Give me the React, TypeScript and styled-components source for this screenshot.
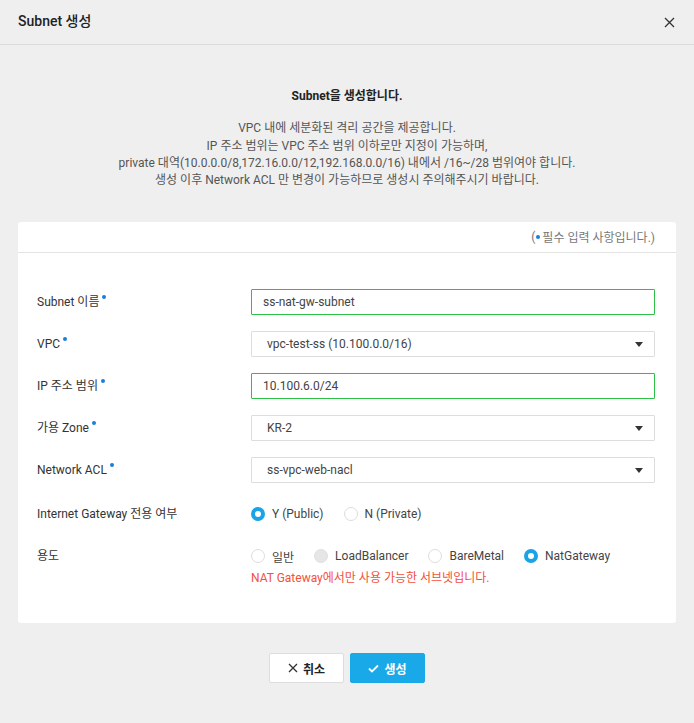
import React, { useState } from 'react'
import styled, { createGlobalStyle } from 'styled-components'

const GlobalStyle = createGlobalStyle`
  html, body {
    margin: 0;
    padding: 0;
    background: #efefef;
    font-family: Roboto, "Noto Sans CJK KR", sans-serif;
    color: #333;
  }
`

const Page = styled.div`
  width: 694px;
  min-height: 723px;
  background: #efefef;
`

const Header = styled.header`
  height: 45px;
  box-sizing: border-box;
  border-bottom: 1px solid #dcdcdc;
  padding: 0 18px;
  display: flex;
  align-items: center;
  justify-content: space-between;
`

const Title = styled.h1`
  margin: 0 0 4px 0;
  font-size: 14px;
  font-weight: 500;
  color: #222;
`

const CloseBtn = styled.button`
  border: none;
  background: none;
  padding: 0;
  width: 14px;
  height: 14px;
  display: flex;
  align-items: center;
  justify-content: center;
  cursor: pointer;
`

const Intro = styled.section`
  padding: 43px 18px 33px;
  text-align: center;
  font-size: 12px;
  line-height: 17.3px;
`

const IntroTitle = styled.p`
  margin: 0 0 15px;
  font-weight: 700;
  color: #222;
`

const IntroText = styled.p`
  margin: 0;
  color: #555;
`

const Card = styled.section`
  margin: 0 18px;
  background: #fff;
  border-radius: 3px;
`

const CardTop = styled.div`
  height: 31px;
  box-sizing: border-box;
  border-bottom: 1px solid #e3e3e3;
  display: flex;
  align-items: center;
  justify-content: flex-end;
  padding: 0 21px 1px 0;
  font-size: 12px;
  color: #777;
`

const Dot = styled.span<{ $inline?: boolean }>`
  display: inline-block;
  width: 4px;
  height: 4px;
  border-radius: 50%;
  background: #1a7fd8;
  vertical-align: 7px;
  margin: ${(p) => (p.$inline ? '0 2px 0 1px' : '0 0 0 3px')};
`

const Form = styled.div`
  padding: 36px 21px 36px 19px;
  display: flex;
  flex-direction: column;
  gap: 16px;
`

const Row = styled.div<{ $spaced?: boolean }>`
  display: grid;
  grid-template-columns: 214px 404px;
  align-items: start;
  margin-top: ${(p) => (p.$spaced ? '2px' : '0')};
`

const Label = styled.label`
  font-size: 12px;
  color: #333;
  line-height: 26px;
  height: 26px;
`

const Field = styled.div`
  display: flex;
  flex-direction: column;
`

const TextInput = styled.input`
  box-sizing: border-box;
  width: 404px;
  height: 26px;
  border: 1px solid #2cc145;
  border-radius: 1px;
  padding: 0 11px;
  font-family: inherit;
  font-size: 12px;
  color: #444;
  outline: none;
  background: #fff;
`

const SelectBox = styled.div`
  box-sizing: border-box;
  width: 404px;
  height: 26px;
  border: 1px solid #ddd;
  border-radius: 1px;
  padding: 0 15px 0 15px;
  display: flex;
  align-items: center;
  justify-content: space-between;
  font-size: 12px;
  color: #444;
  background: #fff;
`

const Caret = styled.span`
  width: 0;
  height: 0;
  border-left: 4px solid transparent;
  border-right: 4px solid transparent;
  border-top: 5px solid #333;
  margin-right: -4px;
`

const RadioGroup = styled.div`
  display: flex;
  align-items: center;
  height: 26px;
  gap: 20px;
`

const RadioItem = styled.label`
  display: flex;
  align-items: center;
  gap: 7px;
  font-size: 12px;
  color: #444;
`

const Circle = styled.span<{ $checked?: boolean; $disabled?: boolean }>`
  box-sizing: border-box;
  width: 14px;
  height: 14px;
  border-radius: 50%;
  background: ${(p) => (p.$disabled ? '#e6e6e6' : '#fff')};
  border: ${(p) =>
    p.$checked ? '4px solid #1aa3e6' : p.$disabled ? '1px solid #e0e0e0' : '1px solid #ddd'};
`

const ErrorText = styled.p`
  margin: 1px 0 0;
  font-size: 12px;
  line-height: 17px;
  color: #f4503c;
`

const Buttons = styled.div`
  display: flex;
  justify-content: center;
  gap: 6px;
  margin-top: 30px;
`

const Button = styled.button<{ $primary?: boolean }>`
  box-sizing: border-box;
  width: 75px;
  height: 30px;
  border-radius: 2px;
  border: 1px solid ${(p) => (p.$primary ? '#1aa9e8' : '#ddd')};
  background: ${(p) => (p.$primary ? '#1aa9e8' : '#fff')};
  color: ${(p) => (p.$primary ? '#fff' : '#222')};
  font-family: inherit;
  font-size: 12px;
  font-weight: 700;
  display: flex;
  align-items: center;
  justify-content: center;
  gap: 5px;
  cursor: pointer;
`

type Opt = { label: string; disabled?: boolean }

function Radios({ options, value, onChange }: { options: Opt[]; value: string; onChange: (v: string) => void }) {
  return (
    <RadioGroup>
      {options.map((o) => (
        <RadioItem key={o.label} onClick={() => !o.disabled && onChange(o.label)}>
          <Circle $checked={value === o.label} $disabled={o.disabled} />
          {o.label}
        </RadioItem>
      ))}
    </RadioGroup>
  )
}

export default function App() {
  const [igw, setIgw] = useState('Y (Public)')
  const [usage, setUsage] = useState('NatGateway')

  return (
    <Page>
      <GlobalStyle />
      <Header>
        <Title>Subnet 생성</Title>
        <CloseBtn aria-label="close">
          <svg width="11" height="11" viewBox="0 0 11 11">
            <path d="M1 1 L10 10 M10 1 L1 10" stroke="#333" strokeWidth="1.3" />
          </svg>
        </CloseBtn>
      </Header>

      <Intro>
        <IntroTitle>Subnet을 생성합니다.</IntroTitle>
        <IntroText>VPC 내에 세분화된 격리 공간을 제공합니다.</IntroText>
        <IntroText>IP 주소 범위는 VPC 주소 범위 이하로만 지정이 가능하며,</IntroText>
        <IntroText>private 대역(10.0.0.0/8,172.16.0.0/12,192.168.0.0/16) 내에서 /16~/28 범위여야 합니다.</IntroText>
        <IntroText>생성 이후 Network ACL 만 변경이 가능하므로 생성시 주의해주시기 바랍니다.</IntroText>
      </Intro>

      <Card>
        <CardTop>
          (<Dot $inline />필수 입력 사항입니다.)
        </CardTop>
        <Form>
          <Row>
            <Label>Subnet 이름<Dot /></Label>
            <TextInput defaultValue="ss-nat-gw-subnet" />
          </Row>
          <Row>
            <Label>VPC<Dot /></Label>
            <SelectBox>vpc-test-ss (10.100.0.0/16)<Caret /></SelectBox>
          </Row>
          <Row>
            <Label>IP 주소 범위<Dot /></Label>
            <TextInput defaultValue="10.100.6.0/24" />
          </Row>
          <Row>
            <Label>가용 Zone<Dot /></Label>
            <SelectBox>KR-2<Caret /></SelectBox>
          </Row>
          <Row>
            <Label>Network ACL<Dot /></Label>
            <SelectBox>ss-vpc-web-nacl<Caret /></SelectBox>
          </Row>
          <Row $spaced>
            <Label>Internet Gateway 전용 여부</Label>
            <Radios
              options={[{ label: 'Y (Public)' }, { label: 'N (Private)' }]}
              value={igw}
              onChange={setIgw}
            />
          </Row>
          <Row>
            <Label>용도</Label>
            <Field>
              <Radios
                options={[
                  { label: '일반' },
                  { label: 'LoadBalancer', disabled: true },
                  { label: 'BareMetal' },
                  { label: 'NatGateway' },
                ]}
                value={usage}
                onChange={setUsage}
              />
              <ErrorText>NAT Gateway에서만 사용 가능한 서브넷입니다.</ErrorText>
            </Field>
          </Row>
        </Form>
      </Card>

      <Buttons>
        <Button>
          <svg width="10" height="10" viewBox="0 0 10 10">
            <path d="M1 1 L9 9 M9 1 L1 9" stroke="#333" strokeWidth="1.3" />
          </svg>
          취소
        </Button>
        <Button $primary>
          <svg width="11" height="9" viewBox="0 0 11 9">
            <path d="M1 4.5 L4 7.5 L10 1.5" stroke="#fff" strokeWidth="1.8" fill="none" />
          </svg>
          생성
        </Button>
      </Buttons>
    </Page>
  )
}
